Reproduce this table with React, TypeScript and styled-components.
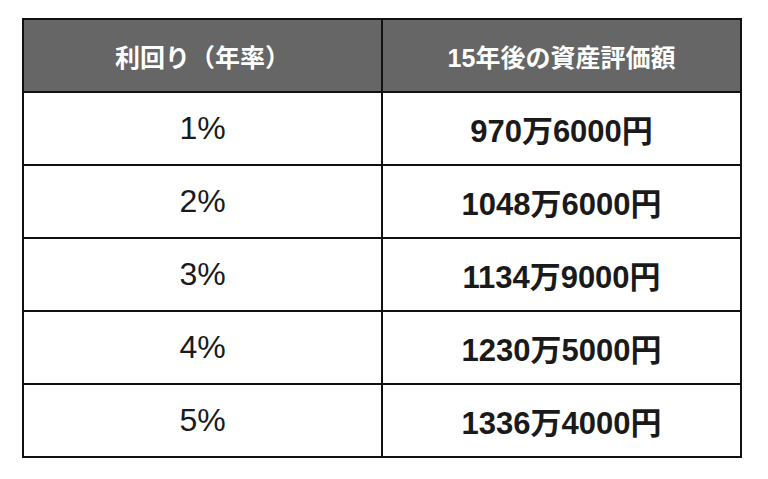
import { Fragment } from "react";
import styled, { createGlobalStyle } from "styled-components";

const GlobalStyle = createGlobalStyle`
  html, body {
    margin: 0;
    padding: 0;
    background: #fff;
  }
  body {
    font-family: "Liberation Sans", "Noto Sans CJK JP", sans-serif;
  }
`;

const Page = styled.div`
  width: 768px;
  height: 479px;
  padding: 18px 0 0 22px;
  box-sizing: border-box;
`;

const Table = styled.div`
  width: 720px;
  display: grid;
  grid-template-columns: 357px 357px;
  grid-auto-rows: 71px;
  gap: 2px;
  padding: 2px;
  box-sizing: border-box;
  background: #111;
`;

const HeadCell = styled.div`
  background: #666;
  color: #fff;
  font-weight: bold;
  font-size: 25px;
  display: flex;
  align-items: center;
  justify-content: center;
`;

const Cell = styled.div<{ $bold?: boolean }>`
  background: #fff;
  color: #1a1a1a;
  font-size: ${(p) => (p.$bold ? "31px" : "32px")};
  font-weight: ${(p) => (p.$bold ? "bold" : "normal")};
  display: flex;
  align-items: center;
  justify-content: center;
`;

const rows = [
  { rate: "1%", value: "970万6000円" },
  { rate: "2%", value: "1048万6000円" },
  { rate: "3%", value: "1134万9000円" },
  { rate: "4%", value: "1230万5000円" },
  { rate: "5%", value: "1336万4000円" },
];

const App = () => {
  return (
    <Page>
      <GlobalStyle />
      <Table>
        <HeadCell>利回り（年率）</HeadCell>
        <HeadCell>15年後の資産評価額</HeadCell>
        {rows.map((r) => (
          <Fragment key={r.rate}>
            <Cell>{r.rate}</Cell>
            <Cell $bold>{r.value}</Cell>
          </Fragment>
        ))}
      </Table>
    </Page>
  );
};

export default App;
